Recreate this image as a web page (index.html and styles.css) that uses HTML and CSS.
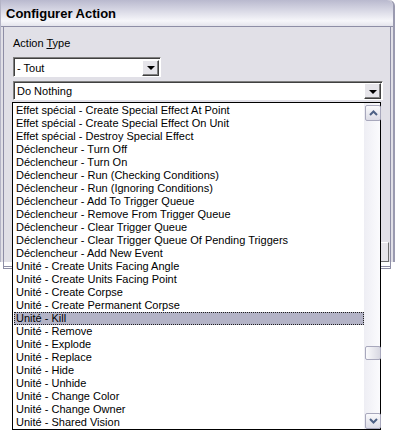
FILE: index.html
```html
<!DOCTYPE html>
<html lang="fr">
<head>
    <meta charset="UTF-8">
    <title>Configurer Action</title>
    <link rel="stylesheet" href="styles.css">
</head>
<body>

    <div class="dialog">
        <div class="titlebar">Configurer Action</div>
        <div class="panel">
            <div class="label">Action <u>T</u>ype</div>
            <div class="combo combo-small">
                <span class="combo-text">- Tout</span>
                <span class="combo-btn"><span class="arrow"></span></span>
            </div>
            <div class="combo combo-wide">
                <span class="combo-text">Do Nothing</span>
                <span class="combo-btn"><span class="arrow"></span></span>
            </div>
            <div class="panel-foot">
                <span class="hidden-btn"></span>
            </div>
        </div>
    </div>

    <!-- opened dropdown of the "Do Nothing" combo -->
    <div class="droplist">
        <ul class="items">
            <li>Effet spécial - Create Special Effect At Point</li>
            <li>Effet spécial - Create Special Effect On Unit</li>
            <li>Effet spécial - Destroy Special Effect</li>
            <li>Déclencheur - Turn Off</li>
            <li>Déclencheur - Turn On</li>
            <li>Déclencheur - Run (Checking Conditions)</li>
            <li>Déclencheur - Run (Ignoring Conditions)</li>
            <li>Déclencheur - Add To Trigger Queue</li>
            <li>Déclencheur - Remove From Trigger Queue</li>
            <li>Déclencheur - Clear Trigger Queue</li>
            <li>Déclencheur - Clear Trigger Queue Of Pending Triggers</li>
            <li>Déclencheur - Add New Event</li>
            <li>Unité - Create Units Facing Angle</li>
            <li>Unité - Create Units Facing Point</li>
            <li>Unité - Create Corpse</li>
            <li>Unité - Create Permanent Corpse</li>
            <li class="selected">Unité - Kill</li>
            <li>Unité - Remove</li>
            <li>Unité - Explode</li>
            <li>Unité - Replace</li>
            <li>Unité - Hide</li>
            <li>Unité - Unhide</li>
            <li>Unité - Change Color</li>
            <li>Unité - Change Owner</li>
            <li>Unité - Shared Vision</li>
        </ul>
        <div class="scrollbar">
            <span class="sb-btn">
                <svg width="9" height="6" viewBox="0 0 9 6"><path d="M1 5 L4.5 1.5 L8 5" fill="none" stroke="#4d6185" stroke-width="2"/></svg>
            </span>
            <span class="sb-track-top"></span>
            <span class="sb-thumb"></span>
            <span class="sb-track-bottom"></span>
            <span class="sb-btn">
                <svg width="9" height="6" viewBox="0 0 9 6"><path d="M1 1 L4.5 4.5 L8 1" fill="none" stroke="#4d6185" stroke-width="2"/></svg>
            </span>
        </div>
    </div>

</body>
</html>
```

FILE: styles.css
```css
body {
    margin: 0;
    width: 395px;
    height: 430px;
    overflow: hidden;
    background-color: #ffffff;
    font-family: "Liberation Sans", Arial, sans-serif;
    font-size: 11px;
    color: #000000;
    position: relative;
}

.dialog {
    width: 392px;
    height: 262px;
    background-color: #e1e0e7;
    border-left: 1px solid #b4b4c6;
    border-right: 2px solid #9a9ab0;
    border-top-right-radius: 6px;
}

.titlebar {
    height: 26px;
    line-height: 28px;
    padding-left: 5px;
    font-weight: bold;
    font-size: 13px;
    border-top-right-radius: 6px;
    border-bottom: 1px solid #8e8ea6;
    background: linear-gradient(#b9b9ce 0%, #d4d4e2 35%, #f6f6fa 80%, #e4e4ec 100%);
}

.panel {
    height: 229px;
    margin: 0 2px 0 2px;
    padding: 10px 0 0 9px;
    border-left: 1px solid #8e8ea6;
    border-right: 1px solid #8e8ea6;
    border-bottom: 3px double #8e8ea6;
    display: flex;
    flex-direction: column;
}

.label {
    height: 14px;
}

.combo {
    display: flex;
    align-items: center;
    background-color: #ffffff;
    border-top: 1px solid #7f7f7f;
    border-left: 1px solid #7f7f7f;
    border-bottom: 1px solid #ffffff;
    border-right: 1px solid #ffffff;
    box-shadow: inset 1px 1px 0 #404040;
}

.combo-small {
    width: 146px;
    height: 18px;
    margin-top: 6px;
}

.combo-wide {
    width: 368px;
    height: 17px;
    margin-top: 4px;
}

.combo-text {
    flex: 1;
    padding-left: 3px;
    padding-top: 1px;
}

.combo-btn {
    width: 15px;
    height: 14px;
    margin-right: 1px;
    margin-top: 1px;
    background-color: #e6e5ea;
    border-top: 1px solid #ffffff;
    border-left: 1px solid #ffffff;
    border-right: 1px solid #404040;
    border-bottom: 1px solid #404040;
    box-shadow: inset -1px -1px 0 #808080;
    display: flex;
    align-items: center;
    justify-content: center;
}

.arrow {
    width: 0;
    height: 0;
    border-left: 4px solid transparent;
    border-right: 4px solid transparent;
    border-top: 4px solid #000000;
    margin-top: 1px;
}

.panel-foot {
    flex: 1;
    display: flex;
    justify-content: flex-end;
    align-items: flex-end;
    padding: 0 1px 4px 0;
}

.hidden-btn {
    width: 70px;
    height: 18px;
    background-color: #e6e5ea;
    border: 1px solid #ffffff;
    border-right-color: #6e6e6e;
    border-bottom-color: #6e6e6e;
}

.droplist {
    position: absolute;
    left: 12px;
    top: 102px;
    width: 367px;
    height: 326px;
    border: 1px solid #000000;
    background-color: #ffffff;
    display: flex;
}

.items {
    list-style: none;
    margin: 0;
    padding: 1px 0 0 0;
    flex: 1;
}

.items li {
    height: 13px;
    line-height: 13px;
    padding-left: 3px;
    white-space: nowrap;
    overflow: hidden;
}

.items li.selected {
    background-color: #b3b3c6;
    outline: 1px dotted #202020;
    outline-offset: -1px;
    padding-left: 2px;
    margin-left: 1px;
}

.scrollbar {
    width: 16px;
    display: flex;
    flex-direction: column;
    background: linear-gradient(to right, #eeeef4, #fbfbfd);
    padding-top: 2px;
}

.sb-btn {
    height: 14px;
    width: 14px;
    margin-left: 1px;
    border: 1px solid #a8a8bc;
    border-radius: 2px;
    background: linear-gradient(#fafafc, #dcdce6);
    display: flex;
    align-items: center;
    justify-content: center;
}

.sb-track-top {
    height: 225px;
}

.sb-thumb {
    height: 12px;
    width: 14px;
    margin-left: 1px;
    border: 1px solid #a8a8bc;
    border-radius: 2px;
    background: linear-gradient(to right, #fafafc, #d8d8e2);
}

.sb-track-bottom {
    flex: 1;
}
```
